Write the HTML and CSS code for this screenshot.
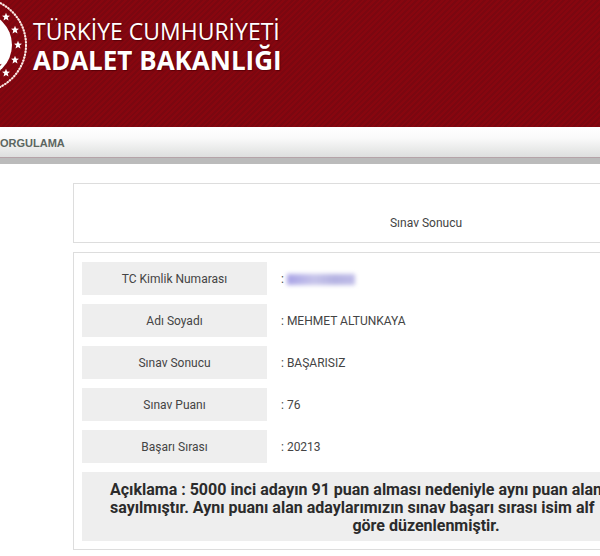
FILE: index.html
```html
<!DOCTYPE html>
<html lang="tr">
<head>
  <meta charset="UTF-8">
  <meta name="viewport" content="width=device-width, initial-scale=1.0"/>
  <title>Adalet Bakanlığı</title>
  <link rel="stylesheet" href="styles.css">
</head>
<body>

  <header>
    <svg class="emblem" viewBox="0 0 28 96" aria-hidden="true">
      <defs>
        <path id="star" fill="#fff" d="M0-4.2 1.1-1.4 4-1.3 1.7 .6 2.5 3.5 0 1.9-2.5 3.5-1.7 .6-4-1.3-1.1-1.4Z"/>
      </defs>
      <circle cx="-21" cy="45" r="47" fill="none" stroke="#d99a96" stroke-width="1.6"/>
      <circle cx="-21" cy="45" r="47" fill="none" stroke="#fbeeea" stroke-width="2" stroke-dasharray="1.8 1.2"/>
      <circle cx="-21" cy="45" r="33" fill="#fff"/>
      <path d="M0 64.500l1.500-.8-.5 1.600-1 .4Z" fill="#8c0a14"/>
      <use href="#star" x="6" y="17"/>
      <use href="#star" x="15" y="30"/>
      <use href="#star" x="18" y="45"/>
      <use href="#star" x="15" y="60"/>
      <use href="#star" x="6" y="73"/>
    </svg>
    <div class="brand">
      <div class="country">TÜRKİYE CUMHURİYETİ</div>
      <div class="ministry">ADALET BAKANLIĞI</div>
    </div>
  </header>

  <nav>
    <a href="#">ORGULAMA</a>
  </nav>

  <main>
    <div class="content">
      <!-- Title -->
      <section class="panel title">
        <h1>Sınav Sonucu</h1>
      </section>

      <!-- Exam result -->
      <section class="panel">
        <table class="result">
          <tr>
            <th scope="row">TC Kimlik Numarası</th>
            <td>: <span class="masked"></span></td>
          </tr>
          <tr>
            <th scope="row">Adı Soyadı</th>
            <td>: MEHMET ALTUNKAYA</td>
          </tr>
          <tr>
            <th scope="row">Sınav Sonucu</th>
            <td>: BAŞARISIZ</td>
          </tr>
          <tr>
            <th scope="row">Sınav Puanı</th>
            <td>: 76</td>
          </tr>
          <tr>
            <th scope="row">Başarı Sırası</th>
            <td>: 20213</td>
          </tr>
        </table>
        <div class="note">
          <p>Açıklama : 5000 inci adayın 91 puan alması nedeniyle aynı puan alan</p>
          <p>sayılmıştır. Aynı puanı alan adaylarımızın sınav başarı sırası isim alf</p>
          <p class="last">göre düzenlenmiştir.</p>
        </div>
      </section>
    </div>
  </main>

</body>
</html>
```
FILE: styles.css
```css
* {
  margin: 0;
  padding: 0;
  box-sizing: border-box;
}

body {
  font-family: Roboto, "Noto Sans", sans-serif;
  font-size: 12px;
  background: #fff;
  color: #444;
}

/* Header */
header {
  display: flex;
  align-items: flex-start;
  gap: 5px;
  height: 127px;
  background: #83060f repeating-linear-gradient(135deg, #87060f 0 2px, #7b0710 2px 4px);
}

.emblem {
  flex: none;
  width: 28px;
  height: 96px;
}

.brand {
  padding-top: 16px;
  font-family: "Open Sans", sans-serif;
  color: #fff;
  white-space: nowrap;
  text-shadow: 1px 1px 1px #5a0008;
}

.country {
  font-size: 23px;
  line-height: 30px;
}

.ministry {
  font-size: 26px;
  line-height: 28px;
  font-weight: 700;
}

/* Menu bar */
nav {
  display: flex;
  align-items: center;
  height: 37px;
  background: linear-gradient(#fff, #fafafa 35%, #dcdedd);
  border-bottom: 6px solid #bbb;
  box-shadow: inset 0 -1px #b5a3a8;
}

nav a {
  font-family: "Liberation Sans", Arial, sans-serif;
  font-size: 11px;
  font-weight: 700;
  color: #5c6660;
  text-decoration: none;
}

main {
  overflow: hidden;
}

/* Panels run past the right edge of narrow windows */
.content {
  display: flex;
  flex-direction: column;
  gap: 9px;
  margin: 19px -179px 6px 73px;
}

.panel {
  padding: 9px 8px 8px;
  border: 1px solid #ddd;
}

.title {
  padding: 30px 8px 10px;
  text-align: center;
}

.title h1 {
  font-size: 12px;
  line-height: 18px;
  font-weight: 400;
}

/* Result table */
.result {
  width: 100%;
  border-spacing: 0;
}

.result th {
  width: 185px;
  height: 42px;
  background: #eee;
  border-bottom: 9px solid #fff;
  font-weight: 400;
}

.result td {
  padding-left: 14px;
  border-bottom: 9px solid #fff;
}

.masked {
  display: inline-block;
  width: 68px;
  height: 11px;
  background: linear-gradient(90deg, #a9a3e6, #c6c4ea 40%, #b5b3e2 70%, #bfbce8);
  filter: blur(2px);
  vertical-align: middle;
}

/* Note */
.note {
  padding: 9px 28px 6px;
  background: #eee;
  color: #2b2b2b;
  font-size: 16px;
  line-height: 18px;
  font-weight: 700;
  white-space: nowrap;
}

.note .last {
  text-align: center;
}
```
